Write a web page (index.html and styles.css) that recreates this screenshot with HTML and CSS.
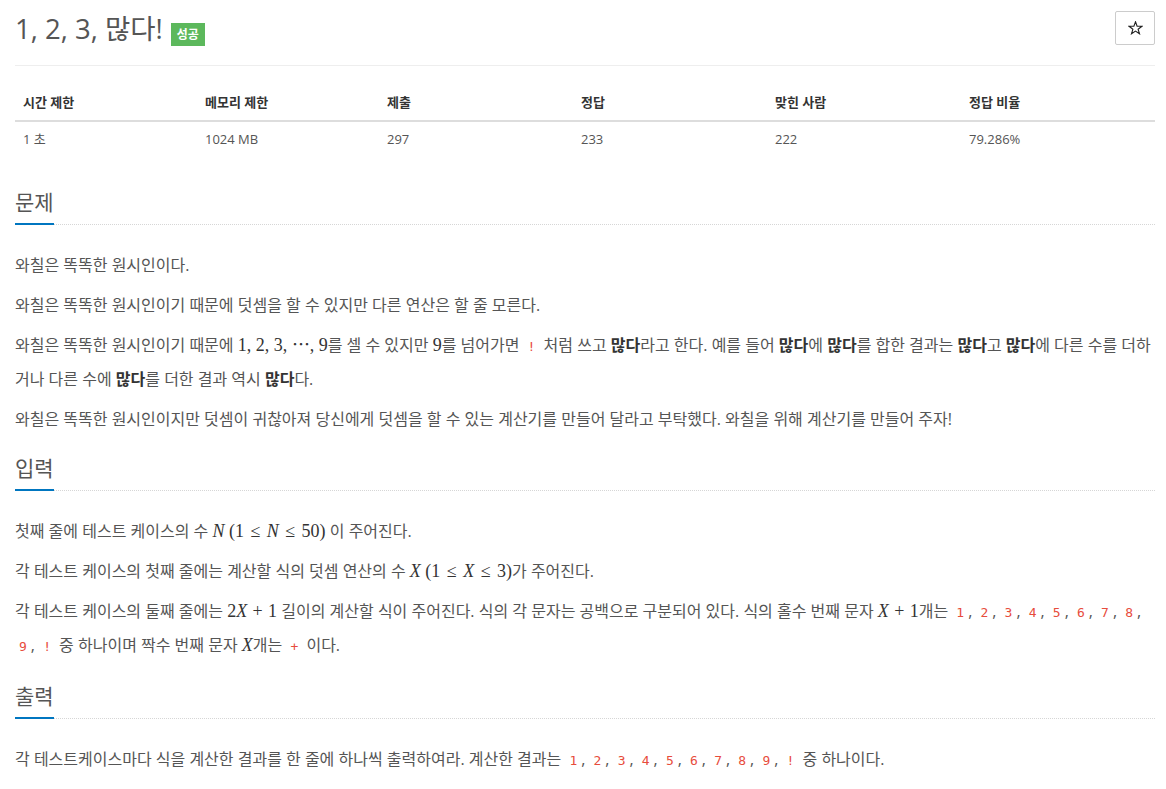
FILE: index.html
```html
<!DOCTYPE html>
<html lang="ko">
<head>
<meta charset="utf-8">
<title>1, 2, 3, 많다!</title>
<link rel="stylesheet" href="styles.css">
</head>
<body>
<div class="page">
  <div class="page-header">
    <h1 class="title"><span class="title-text">1, 2, 3, 많다!</span><span class="badge">성공</span></h1>
    <button class="star" type="button" aria-label="즐겨찾기"><svg class="star-icon" width="15" height="14" viewBox="0 0 15 14"><path d="M7.5 0.8 L9.1 5.2 L13.9 5.3 L10.1 8.2 L11.5 12.8 L7.5 10.1 L3.5 12.8 L4.9 8.2 L1.1 5.3 L5.9 5.2 Z" fill="none" stroke="#222" stroke-width="1.1" stroke-linejoin="miter"/></svg></button>
  </div>

  <table class="info">
    <thead>
      <tr><th class="c1">시간 제한</th><th class="c2">메모리 제한</th><th class="c3">제출</th><th class="c3">정답</th><th class="c3">맞힌 사람</th><th class="c3">정답 비율</th></tr>
    </thead>
    <tbody>
      <tr><td>1 초</td><td>1024 MB</td><td>297</td><td>233</td><td>222</td><td>79.286%</td></tr>
    </tbody>
  </table>

  <section class="sec">
    <div class="headline"><h2>문제</h2></div>
    <div class="desc">
      <p>와칠은 똑똑한 원시인이다.</p>
      <p>와칠은 똑똑한 원시인이기 때문에 덧셈을 할 수 있지만 다른 연산은 할 줄 모른다.</p>
      <p>와칠은 똑똑한 원시인이기 때문에 <span class="m">1, 2, 3, ⋯, 9</span>를 셀 수 있지만 <span class="m">9</span>를 넘어가면 <code>!</code> 처럼 쓰고 <b>많다</b>라고 한다. 예를 들어 <b>많다</b>에 <b>많다</b>를 합한 결과는 <b>많다</b>고 <b>많다</b>에 다른 수를 더하거나 다른 수에 <b>많다</b>를 더한 결과 역시 <b>많다</b>다.</p>
      <p>와칠은 똑똑한 원시인이지만 덧셈이 귀찮아져 당신에게 덧셈을 할 수 있는 계산기를 만들어 달라고 부탁했다. 와칠을 위해 계산기를 만들어 주자!</p>
    </div>
  </section>

  <section class="sec">
    <div class="headline"><h2>입력</h2></div>
    <div class="desc">
      <p>첫째 줄에 테스트 케이스의 수 <span class="m"><i>N</i> (1<span class="rel">≤</span><i>N</i><span class="rel">≤</span>50)</span> 이 주어진다.</p>
      <p>각 테스트 케이스의 첫째 줄에는 계산할 식의 덧셈 연산의 수 <span class="m"><i>X</i> (1<span class="rel">≤</span><i>X</i><span class="rel">≤</span>3)</span>가 주어진다.</p>
      <p>각 테스트 케이스의 둘째 줄에는 <span class="m">2<i>X</i><span class="bin">+</span>1</span> 길이의 계산할 식이 주어진다. 식의 각 문자는 공백으로 구분되어 있다. 식의 홀수 번째 문자 <span class="m"><i>X</i><span class="bin">+</span>1</span>개는 <code>1</code>, <code>2</code>, <code>3</code>, <code>4</code>, <code>5</code>, <code>6</code>, <code>7</code>, <code>8</code>, <code>9</code>, <code>!</code> 중 하나이며 짝수 번째 문자 <span class="m"><i>X</i></span>개는 <code>+</code> 이다.</p>
    </div>
  </section>

  <section class="sec">
    <div class="headline"><h2>출력</h2></div>
    <div class="desc">
      <p>각 테스트케이스마다 식을 계산한 결과를 한 줄에 하나씩 출력하여라. 계산한 결과는 <code>1</code>, <code>2</code>, <code>3</code>, <code>4</code>, <code>5</code>, <code>6</code>, <code>7</code>, <code>8</code>, <code>9</code>, <code>!</code> 중 하나이다.</p>
    </div>
  </section>
</div>
</body>
</html>
```

FILE: styles.css
```css
* { box-sizing: border-box; }

body {
  margin: 0;
  background: #fff;
  color: #555;
  font-family: "Open Sans", "Noto Sans CJK KR", sans-serif;
  font-size: 16px;
}

.page {
  width: 1140px;
  margin-left: 15px;
}

.page-header {
  display: flex;
  justify-content: space-between;
  align-items: flex-start;
  padding-bottom: 18px;
  border-bottom: 1px solid #eee;
}

.title {
  margin: 11px 0 0;
  display: flex;
  align-items: flex-end;
  font-size: 27.5px;
  font-weight: 400;
  line-height: 36px;
  color: #555;
}

.badge {
  display: inline-block;
  margin: 0 0 1px 8px;
  height: 23px;
  padding: 0 6px;
  background: #5cb85c;
  color: #fff;
  font-size: 12px;
  font-weight: 700;
  line-height: 23px;
}

.star {
  margin-top: 11px;
  width: 40px;
  height: 34px;
  padding: 0;
  border: 1px solid #ccc;
  border-radius: 2px;
  background: #fff;
  display: flex;
  align-items: center;
  justify-content: center;
}

.star-icon { display: block; }

.info {
  width: 1140px;
  margin: 18px 0 34px;
  border-collapse: collapse;
  font-size: 13px;
  color: #333;
}

.info th, .info td {
  text-align: left;
  padding: 8px;
}

.info th {
  font-weight: 700;
  line-height: 20px;
  border-bottom: 2px solid #ddd;
}

.info td { color: #555; line-height: 18px; }

.c1, .c2 { width: 182px; }
.c3 { width: 194px; }

.sec { margin-bottom: 21px; }

.headline {
  border-bottom: 1px dotted #d6d6d6;
}

.headline h2 {
  display: inline-block;
  margin: 0 0 -1px;
  padding-bottom: 9px;
  border-bottom: 2px solid #0076c0;
  font-size: 21px;
  font-weight: 400;
  line-height: 24px;
  color: #555;
}

.desc {
  padding-top: 24px;
  font-size: 16px;
  line-height: 32px;
}

.desc p { margin: 0 0 8px; }

.desc b { font-weight: 700; color: #333; }

.m {
  font-family: "Liberation Serif", "DejaVu Serif", serif;
  font-size: 18px;
  color: #333;
}

.m i { font-style: italic; }

.rel { padding: 0 0.36em; }
.bin { padding: 0 0.3em; }

code {
  padding: 2px 4px;
  color: #e74c3c;
  font-family: "DejaVu Sans Mono", "Liberation Mono", monospace;
  font-size: 13px;
}
```
